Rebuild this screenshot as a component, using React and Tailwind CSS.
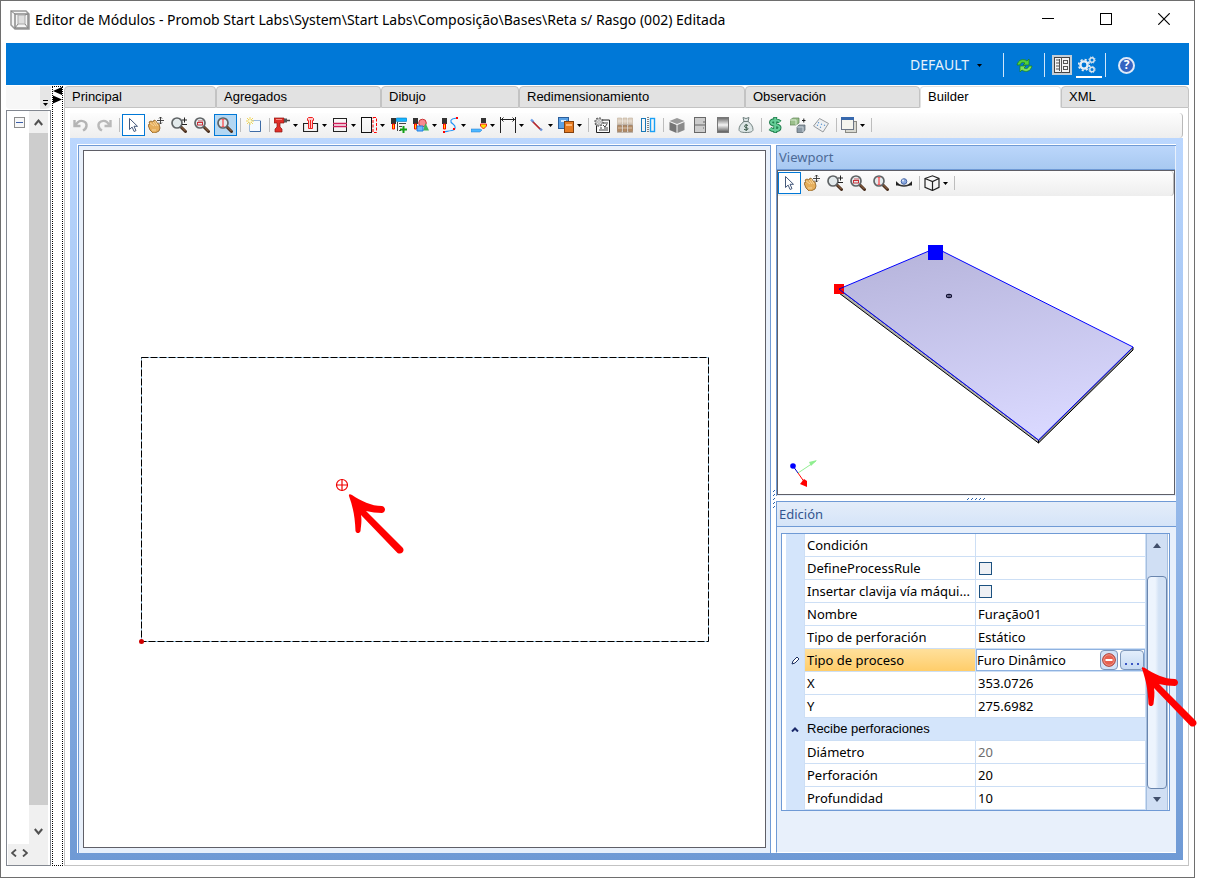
// src/App.jsx
import React, { useState } from 'react';

const TABS = [
  { name: 'Principal', width: 'w-[152px]' },
  { name: 'Agregados', width: 'w-[165px]' },
  { name: 'Dibujo', width: 'w-[138px]' },
  { name: 'Redimensionamiento', width: 'w-[226px]' },
  { name: 'Observación', width: 'w-[175px]' },
  { name: 'Builder', width: 'w-[141px]' },
  { name: 'XML', width: 'flex-1' },
];

const ROWS = [
  { label: 'Condición', value: '' },
  { label: 'DefineProcessRule', check: true },
  { label: 'Insertar clavija vía máqui...', check: true },
  { label: 'Nombre', value: 'Furação01' },
  { label: 'Tipo de perforación', value: 'Estático' },
  { label: 'Tipo de proceso', value: 'Furo Dinâmico', editing: true },
  { label: 'X', value: '353.0726' },
  { label: 'Y', value: '275.6982' },
  { group: 'Recibe perforaciones' },
  { label: 'Diámetro', value: '20', muted: true },
  { label: 'Perforación', value: '20' },
  { label: 'Profundidad', value: '10' },
];

/* ---------- icons ---------- */

const Svg = ({ children, className = 'w-4 h-4 shrink-0', box = '0 0 16 16' }) => (
  <svg viewBox={box} className={className} fill="none" aria-hidden="true">{children}</svg>
);

const Lens = ({ children }) => (
  <Svg>
    <path d="M10 10l4.500 4.500" stroke="#4a3020" strokeWidth="3" strokeLinecap="round" />
    <path d="M10.500 10l3.700 3.800" stroke="#a5714a" strokeWidth="1" strokeLinecap="round" />
    <circle cx="6" cy="6" r="5" fill="#e3eaec" stroke="#606466" strokeWidth="1.700" />
    {children}
  </Svg>
);

const Clamp = () => (
  <>
    <path d="M0 1h5v6H4v5H1V7H0z" fill="#333" />
    <path d="M1.500 7h2v5h-2z" fill="#ffe100" stroke="#f00" />
  </>
);

const ICONS = {
  undo: (
    <Svg>
      <path d="M1.500 3v6h6M2.500 8.500c2-4 5-5.500 8.500-4 4 2 3 7-1 9" stroke="#b4b4b4" strokeWidth="2.400" />
    </Svg>
  ),
  redo: (
    <Svg>
      <path d="M14.500 3v6h-6M13.500 8.500c-2-4-5-5.500-8.500-4-4 2-3 7 1 9" stroke="#b9b9b9" strokeWidth="2.400" />
    </Svg>
  ),
  pointer: (
    <Svg>
      <path d="M4.500 1.500v11l2.600-2.400 2 4.400 1.900-.9-2-4.300h3.500z" fill="#fff" stroke="#44587a" />
    </Svg>
  ),
  pan: (
    <Svg>
      <path d="M0 8l2-1-1-2 2-1 2 1 1-2 2 1 1 2 2 1 1 4-1 3-4 2H5l-3-3z" fill="#e5ae5c" stroke="#8a5a1c" strokeWidth=".8" />
      <path d="M2 6l4 3M5 5l3 4M7 4l3 5M4 13h4" stroke="#fbe0ad" strokeWidth=".8" />
      <path d="M12.500 0v7M9 3.500h7M11 1.500l1.500-1.500L14 1.500M11 5.500L12.500 7 14 5.500" stroke="#333" strokeWidth=".9" />
    </Svg>
  ),
  zoomStep: (
    <Lens>
      <path d="M11 3h5M13.500.500v5M11 7.500h5" stroke="#222" />
    </Lens>
  ),
  zoomWindow: (
    <Lens>
      <rect x="3.500" y="5.500" width="5" height="2.500" stroke="#c8323a" />
      <path d="M4 4h5" stroke="#c8323a" strokeWidth=".8" />
    </Lens>
  ),
  zoomFit: (
    <Lens>
      <path d="M6 2v8" stroke="#f7585c" strokeWidth="1.400" />
      <path d="M4.500 2.500h3M4.500 9.500h3" stroke="#f7585c" />
    </Lens>
  ),
  newItem: (
    <Svg>
      <path d="M3.500 3.500h11v11h-11z" fill="#f5faff" stroke="#9dbbdc" />
      <path d="M4 14.500h10.500V4" stroke="#3e6ba5" />
      <path d="M4 0v8M0 4h8M1 1l6 6M7 1L1 7" stroke="#f0d65a" />
      <circle cx="4" cy="4" r="1.500" fill="#fffbd0" />
    </Svg>
  ),
  drill: (
    <Svg>
      <path d="M0 1h10v5H6v4l2 2v3H1v-3l2-2V6H0z" fill="#e0302a" stroke="#8b1712" strokeWidth=".7" />
      <path d="M10 1.500h3v4h-3z" fill="#555" />
      <path d="M13 3.500h3" stroke="#444" strokeWidth="1.500" />
      <path d="M2 2.500h6" stroke="#f98b80" />
    </Svg>
  ),
  dowel: (
    <Svg>
      <path d="M5.500 6.500h-5v8h14v-8H10" stroke="#222" strokeWidth="1.200" />
      <path d="M4.500 1.500l1-1h4l1 1v2h-1v8h-4v-8h-1z" fill="#ffc9c9" stroke="#e22" />
      <path d="M7.500 3v8" stroke="#e22" />
    </Svg>
  ),
  groove: (
    <Svg>
      <rect x="1.500" y="1.500" width="13" height="13" stroke="#222" />
      <path d="M1 6.500h14M1 9.500h14" stroke="#d11e5b" strokeWidth="1.300" />
    </Svg>
  ),
  edge: (
    <Svg>
      <rect x=".5" y=".5" width="10" height="15" stroke="#111" />
      <path d="M12 .5h3.500v15H12z" stroke="#f00" strokeDasharray="3 1.500" />
    </Svg>
  ),
  operation: (
    <Svg>
      <rect x="5" y="1" width="11" height="3.500" rx="1" fill="#16b4ff" stroke="#0675b5" strokeWidth=".6" />
      <path d="M6.500 5v9M8 6.500h7M8 9.500h3M8 13.500h2" stroke="#444" />
      <Clamp />
      <path d="M12.500 9v7M9 12.500h7" stroke="#14a014" strokeWidth="2" />
    </Svg>
  ),
  shapes: (
    <Svg>
      <circle cx="9.500" cy="6" r="3.800" fill="#f78a92" stroke="#c33" />
      <Clamp />
      <path d="M12.500 6l3.500 7.500H10z" fill="#3fb55b" />
      <path d="M4 9h6v5H4z" fill="#6bb6ff" stroke="#1c7ee0" />
    </Svg>
  ),
  path: (
    <Svg>
      <Clamp />
      <path d="M15 1C7 2 8 5 11 7s3 6-1 6.500-5 1-8 1.500" stroke="#2494f4" strokeWidth="1.200" />
      <path d="M14 0h2v2h-2zM11 11h2v2h-2zM1 14h2v2H1z" fill="#f00" />
    </Svg>
  ),
  mill: (
    <Svg>
      <path d="M10 1h5v5h-5z" fill="#333" />
      <path d="M9.500 7h6v2l-3 3-3-3z" fill="#ffe100" stroke="#e22" />
      <path d="M0 12h9l2 1-2 2H0z" fill="#4fb8ff" stroke="#1d7ad0" strokeWidth=".5" />
    </Svg>
  ),
  dimension: (
    <Svg>
      <path d="M.5 0v16M15.500 0v16M1 2.500h14M3.500.5l-2 2 2 2M12.500.5l2 2-2 2" stroke="#222" />
    </Svg>
  ),
  line: (
    <Svg>
      <path d="M3 4l9 9" stroke="#c22" strokeWidth="1.600" />
      <path d="M2 2.500l2.500 2.500M11 11.500l2 2" stroke="#6b9fe8" strokeWidth="2.400" />
      <path d="M3.500 4l8.500 8.500" stroke="#823048" strokeWidth=".7" />
    </Svg>
  ),
  layers: (
    <Svg>
      <rect x=".5" y=".5" width="10" height="11" fill="#5ba1e5" stroke="#2b5e9b" />
      <path d="M3 3h5v2H3z" fill="#d9ecff" />
      <rect x="6.500" y="4.500" width="9" height="11" fill="#e57b22" stroke="#84410e" />
      <path d="M8 7h6v2H8z" fill="#ffb978" />
    </Svg>
  ),
  settings: (
    <Svg>
      <path d="M4 3h11.500v12.500H2.500V9z" fill="#fafafa" stroke="#222" />
      <path d="M5 13h9M6 11h2M10 11h4M9 8l2 2 2-3M9 6h5" stroke="#444" />
      <circle cx="5" cy="5" r="4" fill="#ddd" stroke="#555" strokeWidth="1.400" strokeDasharray="1.600 1.500" />
      <circle cx="5" cy="5" r="3.200" fill="#e4e4e4" stroke="#777" strokeWidth=".7" />
      <circle cx="5" cy="5" r="1.300" fill="#fff" stroke="#777" strokeWidth=".6" />
    </Svg>
  ),
  tiles: (
    <Svg>
      <path d="M.5 1h4v6h-4zM6 1h4v6H6zM11.500 1h4v6h-4z" fill="#ddd0c2" stroke="#c3b19c" strokeWidth=".6" />
      <path d="M.5 8.500h4v6h-4zM6 8.500h4v6H6zM11.500 8.500h4v6h-4z" fill="#b48c66" stroke="#8f6a48" strokeWidth=".6" />
      <path d="M0 7.800h16M0 15.300h16" stroke="#8a7462" strokeWidth=".6" />
      <path d="M1 4h14M1 11h14" stroke="#f4ebe1" strokeWidth=".6" />
    </Svg>
  ),
  mirror: (
    <Svg>
      <rect x="1.500" y="1.500" width="4" height="13" stroke="#1878b8" />
      <path d="M8 0v16" stroke="#111" strokeDasharray="1 1" />
      <rect x="10.500" y="1.500" width="4" height="13" stroke="#1aa0f5" strokeWidth="1.400" />
    </Svg>
  ),
  box: (
    <Svg>
      <path d="M.5 4L8 1l7.500 3L8 7z" fill="#9a9a9a" />
      <path d="M.5 5l7 3v8l-7-3z" fill="#757575" />
      <path d="M15.500 5l-7 3v8l7-3z" fill="#8a8a8a" />
    </Svg>
  ),
  cabinet: (
    <Svg>
      <rect x="2.500" y=".5" width="11" height="15" fill="#ccc" stroke="#686868" />
      <path d="M3 8h10M11 5h2M11 11h1" stroke="#666" strokeWidth="1.200" />
    </Svg>
  ),
  panel: (
    <Svg>
      <defs>
        <linearGradient id="panelFill" x1="0" y1="0" x2="0" y2="1">
          <stop offset="0" stopColor="#666" />
          <stop offset=".5" stopColor="#f4f4f4" />
          <stop offset="1" stopColor="#555" />
        </linearGradient>
      </defs>
      <rect x="2.500" y=".5" width="11" height="15" fill="url(#panelFill)" stroke="#777" />
    </Svg>
  ),
  budget: (
    <Svg>
      <path d="M5 .5l3 1 3-1-1 4c3 2 5 5 5 8 0 2-2 3-7 3s-7-1-7-3c0-3 2-6 5-8z" fill="#dde6e6" stroke="#71807f" />
      <path d="M5.500 4.500h5" stroke="#71807f" />
      <path d="M10 8.500C8 7.500 6.500 8 6.500 9.500c0 1.300 3.500.8 3.500 2.200 0 1.400-2 1.500-4 .6M8.200 7v7" stroke="#3c5a4a" />
    </Svg>
  ),
  money: (
    <Svg>
      <path d="M13 5C11 2.500 4 2.500 4 5.500c0 3.200 8.500 1.500 8.500 5 0 3.500-7 3.500-9.500 1M8.200 0v16" stroke="#23804f" strokeWidth="4" />
      <path d="M13 5C11 2.500 4 2.500 4 5.500c0 3.200 8.500 1.500 8.500 5 0 3.500-7 3.500-9.500 1M8.200.8v14.400" stroke="#66cf98" strokeWidth="2" />
    </Svg>
  ),
  swap: (
    <Svg>
      <path d="M0 3l3-2h6v5L6 8H0z" fill="#9cc08c" stroke="#5d7f52" strokeWidth=".7" />
      <path d="M0 3h6v5" stroke="#d9ead2" />
      <path d="M7 10l2-2h6v5l-2 2.500H7z" fill="#8c9aa5" stroke="#56636c" strokeWidth=".7" />
      <path d="M7 10h6v5" stroke="#c6d0d7" />
      <path d="M12 3.500h3.500M13.800 1.500v4" stroke="#222" />
    </Svg>
  ),
  notes: (
    <Svg>
      <path d="M6.500 1.500l9 5-5.500 8.500-9.500-6z" fill="#eef0f2" stroke="#96999c" />
      <path d="M5 5.500l1 .5M4 8l1 .5M8 7l1 .5M7 10l1 .5M11 8l1 .5" stroke="#4d8dce" strokeWidth="1.200" />
    </Svg>
  ),
  windows: (
    <Svg>
      <rect x="4.500" y="4.500" width="11" height="11" fill="#d8d8d0" stroke="#8a8a84" />
      <rect x=".5" y=".5" width="12" height="12" fill="#f5f5ee" stroke="#6c7685" />
      <path d="M0 0h13v3H0z" fill="#3768ad" />
    </Svg>
  ),
  orbit: (
    <Svg>
      <path d="M1 8c3 4 11 4 14 0" stroke="#333" strokeWidth="1.500" />
      <path d="M0 6v4.500h4zM16 6v4.500h-4z" fill="#222" />
      <circle cx="8" cy="6.500" r="2.800" fill="#8ba9e0" stroke="#4767a5" />
      <circle cx="7" cy="5.500" r="1" fill="#e5edfb" />
    </Svg>
  ),
  wireCube: (
    <Svg>
      <path d="M1 3.500L8.500.8 15 3.500v8.800l-6.500 3.200L1 12.300zM1 3.500l7.500 3 6.500-3M8.500 6.500v9" stroke="#222" strokeWidth="1.200" />
    </Svg>
  ),
};

const Caret = ({ className = 'w-[5px] h-[3px] shrink-0' }) => (
  <svg viewBox="0 0 5 3" className={className} aria-hidden="true"><path d="M0 0h5L2.500 3z" fill="#000" /></svg>
);

const BUILDER_TOOLS = [
  ['undo'], ['redo'], '|', ['pointer', 'outline'], ['pan'], ['zoomStep'], ['zoomWindow'], ['zoomFit', 'active'], '|',
  ['newItem'], '|', ['drill', 'menu'], ['dowel', 'menu'], ['groove', 'menu'], ['edge', 'menu'], ['operation'],
  ['shapes', 'menu'], ['path', 'menu'], ['mill', 'menu'], ['dimension', 'menu'], ['line', 'menu'], ['layers', 'menu'], '|',
  ['settings'], ['tiles'], ['mirror'], '|', ['box'], ['cabinet'], ['panel'], ['budget'], '|',
  ['money'], ['swap'], ['notes'], '|', ['windows', 'menu'], '|',
];

const VIEW_TOOLS = [
  ['pointer', 'outline'], ['pan'], ['zoomStep'], ['zoomWindow'], ['zoomFit'], ['orbit'], '|', ['wireCube', 'menu'], '|',
];

function Toolbar({ items, label }) {
  return (
    <div role="toolbar" aria-label={label}
         className="h-[25px] shrink-0 flex items-start pt-px bg-linear-to-b from-[#fdfdfd] to-[#eeeeee] border-r border-[#b9b9b9] rounded-r-sm overflow-hidden">
      {items.map((item, i) => {
        if (item === '|') {
          return <span key={i} className="w-[6px] h-[22px] shrink-0 flex items-center justify-center"><span className="w-px h-[14px] bg-[#bdbdbd]" /></span>;
        }
        const [icon, mode] = item;
        const look = mode === 'active' ? 'w-[23px] border border-[#0078d7] bg-[#b3d7f3]'
          : mode === 'outline' ? 'w-[23px] border border-[#0078d7] bg-white'
          : mode === 'menu' ? 'w-[29px] gap-[3px]'
          : 'w-[23px]';
        return (
          <button key={i} aria-label={icon} className={`h-[22px] shrink-0 flex items-center justify-center pr-px ${look}`}>
            {ICONS[icon]}
            {mode === 'menu' && <Caret />}
          </button>
        );
      })}
    </div>
  );
}

/* ---------- window frame ---------- */

function TitleBar() {
  return (
    <header className="h-[42px] shrink-0 flex items-center pl-[9px] pr-[24px] pb-[4px]">
      <Svg className="w-5 h-5 mr-[5px] shrink-0" box="0 0 20 20">
        <path d="M1 1h15l3 3v15H5l-4-4z" fill="#f5f5f5" stroke="#999" strokeWidth="1.500" />
        <rect x="5" y="4" width="13" height="14" stroke="#8b8b8b" strokeWidth="1.500" />
        <rect x="8" y="5" width="7" height="9" fill="#dedede" stroke="#aaa" />
        <path d="M1 1l4 3M5 18l3-4M15 14l3 4M15 5l3-1" stroke="#888" />
      </Svg>
      <h1 className="flex-1 text-[14px] leading-5 text-black whitespace-nowrap">
        Editor de Módulos - Promob Start Labs\System\Start Labs\Composição\Bases\Reta s/ Rasgo (002) Editada
      </h1>
      <div className="flex items-center gap-[46px] pb-[2px]">
        <button aria-label="Minimizar">
          <Svg className="w-[12px] h-[12px]" box="0 0 12 12"><path d="M0 5.500h12" stroke="#000" /></Svg>
        </button>
        <button aria-label="Maximizar">
          <Svg className="w-[12px] h-[12px]" box="0 0 12 12"><rect x=".5" y=".5" width="11" height="11" stroke="#000" /></Svg>
        </button>
        <button aria-label="Cerrar">
          <Svg className="w-[12px] h-[12px]" box="0 0 12 12"><path d="M.3.300l11.400 11.400M11.700.300L.3 11.700" stroke="#000" strokeWidth="1.200" /></Svg>
        </button>
      </div>
    </header>
  );
}

function BlueBar() {
  return (
    <div className="h-[42px] shrink-0 bg-[#0078d7] flex items-center justify-end pr-[54px] pt-[2px]">
      <label className="flex items-center gap-[7px] mr-[21px]">
        <select aria-label="Tema" className="appearance-none text-[14px] leading-5 text-[#e6f2fc]">
          <option>DEFAULT</option>
        </select>
        <Caret />
      </label>
      <span className="w-px h-6 bg-[#cfe6fa] mr-[12px]" />
      <button aria-label="Actualizar" className="mr-[11px]">
        <Svg className="w-[17px] h-[17px]" box="0 0 17 17">
          <path d="M1 8c1-5 6-7 10-4l2-2v6H7l2-2C7 5 5 5 4 8z" fill="#54cf3d" stroke="#19801a" strokeWidth=".7" />
          <path d="M16 9c-1 5-6 7-10 4l-2 2V9h6l-2 2c2 1 4 1 5-2z" fill="#7be15c" stroke="#19801a" strokeWidth=".7" />
        </Svg>
      </button>
      <span className="w-px h-6 bg-[#cfe6fa] mr-[7px]" />
      <button aria-label="Propiedades" className="bg-[#c3cdd6] w-5 h-5 flex items-center justify-center mr-[4px]">
        <Svg className="w-[16px] h-[16px]" box="0 0 16 16">
          <rect x=".5" y=".5" width="15" height="15" fill="#f4f4f4" stroke="#444" />
          <path d="M7.500 0v16M2 3h3M2 6h3M2 9h3M2 12h3M5.500 2v12" stroke="#555" />
          <rect x="9.500" y="3.500" width="4" height="3" stroke="#555" />
          <rect x="9.500" y="9.500" width="4" height="3" stroke="#555" />
        </Svg>
      </button>
      <button aria-label="Configuración" className="w-[26px] h-[25px] border-b-2 border-white flex pl-[2px] pt-[3px] mr-[3px]">
        <Svg className="w-[18px] h-[18px]" box="0 0 18 18">
          <circle cx="6" cy="9" r="3.600" stroke="#e8eef4" strokeWidth="2.400" />
          <circle cx="6" cy="9" r="5.400" stroke="#e8eef4" strokeWidth="1.600" strokeDasharray="2.120 2.120" />
          <circle cx="14" cy="4" r="2.200" stroke="#dde6ee" strokeWidth="1.400" />
          <circle cx="14" cy="4" r="3.200" stroke="#dde6ee" strokeDasharray="1.250 1.250" />
          <circle cx="14" cy="13.500" r="2.200" stroke="#dde6ee" strokeWidth="1.400" />
          <circle cx="14" cy="13.500" r="3.200" stroke="#dde6ee" strokeDasharray="1.250 1.250" />
        </Svg>
      </button>
      <span className="w-px h-6 bg-[#cfe6fa] mr-[12px]" />
      <button aria-label="Ayuda" className="w-[17px] h-[17px] rounded-full border-2 border-[#dfe9f8] bg-[#3563c1] flex items-center justify-center text-[12px] leading-3 font-bold text-white">?</button>
    </div>
  );
}

function TreePane() {
  return (
    <aside className="w-[45px] shrink-0 flex flex-col pt-px">
      <div className="h-[23px] shrink-0 rounded-b-sm bg-[#f7f7f7] flex justify-end mb-px">
        <button aria-label="Opciones" className="w-[11px] bg-[#e6e6e6] rounded-br-md flex flex-col items-center justify-end gap-[2px] pb-[3px]">
          <span className="w-[5px] h-px bg-black" />
          <Caret />
        </button>
      </div>
      <div className="flex-1 flex flex-col border border-[#828790] pr-[2px] pl-px">
        <div className="flex-1 flex">
          <div className="flex-1 pl-[6px] pt-[6px]">
            <button aria-label="Contraer" className="w-[11px] h-[11px] border border-[#8c8c8c] bg-[#f7f7f7] flex items-center justify-center">
              <span className="w-[7px] h-px bg-[#3b5ea8]" />
            </button>
          </div>
          <div className="w-[19px] bg-[#f0f0f0] flex flex-col items-center">
            <button aria-label="Subir" className="h-[22px] flex items-center">
              <Svg className="w-[9px] h-[7px]" box="0 0 9 7"><path d="M.8 6l3.700-4.500L8.200 6" stroke="#505050" strokeWidth="2" /></Svg>
            </button>
            <div className="flex-1 w-full bg-[#cdcdcd]" />
            <button aria-label="Bajar" className="h-[39px] flex items-center pt-[14px]">
              <Svg className="w-[9px] h-[7px]" box="0 0 9 7"><path d="M.8 1l3.700 4.500L8.200 1" stroke="#505050" strokeWidth="2" /></Svg>
            </button>
          </div>
        </div>
        <div className="h-[21px] bg-[#f0f0f0] flex items-center gap-[5px] pl-[3px] pb-[3px]">
          <button aria-label="Izquierda"><Svg className="w-[6px] h-[8px]" box="0 0 6 8"><path d="M5 .5L1 4l4 3.500" stroke="#505050" strokeWidth="1.800" /></Svg></button>
          <button aria-label="Derecha"><Svg className="w-[6px] h-[8px]" box="0 0 6 8"><path d="M1 .5L5 4 1 7.500" stroke="#505050" strokeWidth="1.800" /></Svg></button>
        </div>
      </div>
    </aside>
  );
}

function Splitter() {
  return (
    <div className="w-[11px] shrink-0 ml-px mt-px border border-dotted border-black flex flex-col items-center">
      <Svg className="w-[9px] h-[17px]" box="0 0 9 17">
        <path d="M9 0v8L0 4zM0 8.500v8L9 12.500z" fill="#000" />
      </Svg>
    </div>
  );
}

function TabBar({ active, onSelect }) {
  return (
    <div role="tablist" className="h-[22px] shrink-0 flex mt-px">
      {TABS.map(t => (
        <button key={t.name} role="tab" aria-selected={active === t.name} onClick={() => onSelect(t.name)}
                className={`${t.width} h-full min-w-0 pl-[7px] text-left font-['Liberation_Sans',sans-serif] text-[13px] leading-5 text-black border rounded-t-sm
                  ${active === t.name
                    ? 'bg-white border-[#e2e2e2] border-b-white'
                    : 'bg-[#e2e2e2] border-[#c3c3c3]'}`}>
          {t.name}
        </button>
      ))}
    </div>
  );
}

/* ---------- drawings ---------- */

const ARROW = 'M0 1C-.5-1 1-1 3 0c9 6 19 11 30 11 4 1 4 6 0 7-5 0-11-1-16-2l36.500 36.500c3 3.500-1 7.500-5 5.500L12 20c1 6 0 11-.5 16-1 3-4.500 2.500-5 0C6 22 4 12 0 1z';

function Canvas() {
  return (
    <div className="flex-1 min-h-0 min-w-0 border border-[#5f5f67] bg-white">
      <svg viewBox="0 0 681 696" className="w-full h-full" fill="none" role="img" aria-label="Vista superior de la base">
        <rect x="57.500" y="206.500" width="567" height="284" stroke="#9fd0f2" />
        <rect x="57.500" y="206.500" width="567" height="284" stroke="#000" strokeDasharray="7 2" />
        <circle cx="57.500" cy="490.500" r="2.500" fill="#d00000" />
        <circle cx="258" cy="334" r="5.500" stroke="#f00000" strokeWidth="1.200" />
        <path d="M252 334h12M258 328v12" stroke="#f00000" strokeWidth="1.200" />
        <path d={ARROW} fill="#ff0000" transform="translate(265 344)" />
      </svg>
    </div>
  );
}

function Scene() {
  return (
    <svg viewBox="0 0 396 298" className="flex-1 min-h-0 w-full" fill="none" role="img" aria-label="Vista 3D de la base">
      <defs>
        <linearGradient id="board" x1=".3" y1="0" x2=".6" y2="1">
          <stop offset="0" stopColor="#b7b5dc" />
          <stop offset="1" stopColor="#dad9ff" />
        </linearGradient>
      </defs>
      <path d="M61 93l199.500 151v3L61 97z" fill="#b0b0ac" stroke="#000" />
      <path d="M260.500 244l94.500-93v3l-94.500 93z" fill="#8c8c88" stroke="#000" />
      <path d="M61 93l97-41 197 99-94.500 93z" fill="url(#board)" stroke="#0000ff" />
      <rect x="56" y="88" width="10" height="10" fill="#ff0000" />
      <path d="M66 91l-5 2 5 4" stroke="#00c" />
      <rect x="150" y="49" width="15" height="15" fill="#0000ff" />
      <ellipse cx="171" cy="100" rx="2.500" ry="1.600" stroke="#101030" strokeWidth="1.200" />
      <path d="M171 98v4" stroke="#101030" />
      <path d="M20 277l-5-7" stroke="#0000c0" />
      <circle cx="15" cy="270" r="2.800" fill="#0000ff" />
      <path d="M20 277l18-12" stroke="#90ee90" />
      <path d="M39 264l-8 2 2 4z" fill="#90ee90" />
      <path d="M20 277l7 10" stroke="#ff0000" />
      <path d="M29 285v6l-7-3 4-5z" fill="#ff0000" />
    </svg>
  );
}

/* ---------- property grid ---------- */

function ValueCell({ row }) {
  if (row.check) {
    return <input type="checkbox" aria-label={row.label}
                  className="block appearance-none w-[13px] h-[13px] ml-[3px] border border-[#1c5180] bg-[#eef0f4] checked:bg-[#1c5180]" />;
  }
  if (row.editing) {
    return (
      <div className="relative h-[22px] flex items-center gap-[2px] border border-[#8fb2e0]">
        <input aria-label={row.label} defaultValue={row.value} className="flex-1 min-w-0 outline-none" />
        <button aria-label="Quitar" className="w-[18px] h-[20px] rounded-sm border border-[#7d97bb] bg-[#d3e3f7] flex items-center justify-center">
          <Svg className="w-[14px] h-[14px]" box="0 0 14 14">
            <circle cx="7" cy="7" r="6.300" fill="#e6614f" stroke="#a5342a" />
            <circle cx="7" cy="7" r="5.300" stroke="#f7aea3" strokeWidth=".7" />
            <path d="M3.500 7h7" stroke="#fff" strokeWidth="2" />
          </Svg>
        </button>
        <button aria-label="Editar" className="w-[24px] h-[20px] rounded-sm border border-[#7d97bb] bg-linear-to-b from-[#e3eefb] to-[#c6daf3] flex items-end justify-center gap-[4px] pb-[4px]">
          <span className="w-[2px] h-[2px] bg-[#3a56c4]" />
          <span className="w-[2px] h-[2px] bg-[#3a56c4]" />
          <span className="w-[2px] h-[2px] bg-[#3a56c4]" />
        </button>
        <Svg className="absolute z-10 -right-[56px] top-4 w-[60px] h-[62px]" box="-2 -2 60 62">
          <path d={ARROW} fill="#ff0000" />
        </Svg>
      </div>
    );
  }
  return <span className={`block pl-[2px] ${row.muted ? 'text-[#6d6d6d]' : ''}`}>{row.value}</span>;
}

function PropertyGrid() {
  return (
    <div className="flex border border-[#6f9ad5] bg-white pl-[4px] pr-px">
      <div className="flex-1 min-w-0">
        <table className="w-full table-fixed border-separate border-spacing-0 text-[13px] leading-5 text-black">
          <colgroup>
            <col className="w-[18px]" />
            <col className="w-[171px]" />
            <col />
          </colgroup>
          <tbody>
            {ROWS.map(row => row.group ? (
              <tr key={row.group} className="h-[23px] bg-[#d4e5fb] font-['Liberation_Sans',sans-serif]">
                <td className="p-0">
                  <Svg className="w-[8px] h-[5px] mx-auto" box="0 0 8 5"><path d="M1 4.500L4 1.500l3 3" stroke="#1b2a6b" strokeWidth="2" /></Svg>
                </td>
                <th colSpan={2} className="p-0 pl-[3px] text-left font-normal border-b border-[#cddff5]">{row.group}</th>
              </tr>
            ) : (
              <tr key={row.label} className="h-[23px]">
                <td className="p-0 bg-[#d4e5fb]">
                  {row.editing && (
                    <Svg className="w-[9px] h-[9px] mx-auto" box="0 0 9 9">
                      <path d="M1 8l1-3 4-4 2 2-4 4z" fill="#fff" stroke="#1d3160" />
                    </Svg>
                  )}
                </td>
                <th className={`p-0 pl-[2px] text-left font-normal whitespace-nowrap border-l border-b border-[#cddff5] ${row.editing ? 'bg-linear-to-b from-[#ffe09b] to-[#ffcd69]' : ''}`}>
                  {row.label}
                </th>
                <td className="p-0 border-x border-b border-[#cddff5]"><ValueCell row={row} /></td>
              </tr>
            ))}
          </tbody>
        </table>
      </div>
      <div className="w-[22px] shrink-0 flex flex-col items-center bg-[#d0dff4] border-x border-[#a6bfdf]">
        <button aria-label="Subir" className="h-[42px] flex items-start pt-[9px]">
          <Svg className="w-[8px] h-[5px]" box="0 0 8 5"><path d="M0 5l4-5 4 5z" fill="#414f6b" /></Svg>
        </button>
        <div className="flex-1 w-full rounded-sm border border-[#6a86ae] bg-linear-to-r from-[#edf4fd] from-40% to-[#d3e2f5] to-60%" />
        <button aria-label="Bajar" className="h-[21px] flex items-center">
          <Svg className="w-[8px] h-[5px]" box="0 0 8 5"><path d="M0 0h8L4 5z" fill="#414f6b" /></Svg>
        </button>
      </div>
    </div>
  );
}

function Grip({ vertical }) {
  return (
    <span className={`flex gap-[2px] ${vertical ? 'flex-col' : ''}`}>
      {[0, 1, 2, 3, 4].map(i => (
        <Svg key={i} className="w-[2px] h-[2px]" box="0 0 2 2"><path d="M0 2L2 0" stroke="#2b62ad" /></Svg>
      ))}
    </span>
  );
}

export default function App() {
  const [tab, setTab] = useState('Builder');

  return (
    <div className="h-screen min-h-[600px] bg-white pr-[10px] font-['Noto_Sans','Open_Sans',sans-serif]">
      <div className="h-full flex flex-col border border-[#6e6e6e]">
        <TitleBar />
        <div className="flex-1 min-h-0 flex flex-col px-[5px] pb-[11px]">
          <BlueBar />
          <div className="flex-1 min-h-0 flex">
            <TreePane />
            <Splitter />
            <main className="flex-1 min-w-0 flex flex-col ml-px">
              <TabBar active={tab} onSelect={setTab} />
              <div className="flex-1 min-h-0 flex flex-col border-x border-b border-[#c3c3c3] p-[5px]">
                <Toolbar items={BUILDER_TOOLS} label="Builder" />
                <div className="flex-1 min-h-0 flex flex-col bg-linear-to-b from-[#bbd7fe] to-[#6f9ad5] pt-[6px] px-[7px] pb-[7px]">
                  <div className="flex-1 min-h-0 flex bg-white pt-px pl-px">
                    <section className="flex-1 min-w-0 flex border border-b-0 border-[#6f9ad5] bg-[#e8f0fb] p-[4px] pb-[5px]">
                      <Canvas />
                    </section>
                    <div className="w-[5px] shrink-0 flex items-center justify-center"><Grip vertical /></div>

                    <section className="w-[400px] shrink-0 flex flex-col">
                      {/* Viewport */}
                      <div className="flex-1 min-h-0 flex flex-col border-l border-t border-[#6f9ad5] bg-[#e8f0fb] pr-px pb-px">
                        <h2 className="h-[24px] shrink-0 pl-[2px] text-[13px] leading-[22px] text-[#4c6a96] bg-linear-to-b from-[#bbd6fb] to-[#a8c9f1] border-b border-[#6f9ad5]">Viewport</h2>
                        <div className="flex-1 min-h-0 flex flex-col border border-[#5f5f67] bg-white">
                          <Toolbar items={VIEW_TOOLS} label="Viewport" />
                          <Scene />
                        </div>
                      </div>
                      <div className="h-[5px] shrink-0 flex items-center justify-center"><Grip /></div>
                      {/* Edición */}
                      <div className="shrink-0 border-l border-t border-[#6f9ad5] border-b border-b-white bg-[#e8f0fb]">
                        <h2 className="h-[25px] pl-[2px] text-[13px] leading-6 text-[#33558f] bg-linear-to-b from-[#e4edf9] to-[#d5e4f8] border-b border-[#6f9ad5]">Edición</h2>
                        <div className="pt-[6px] pl-[4px] pr-[6px] pb-[41px]">
                          <PropertyGrid />
                        </div>
                      </div>
                    </section>
                  </div>
                </div>
              </div>
            </main>
          </div>
        </div>
      </div>
    </div>
  );
}
